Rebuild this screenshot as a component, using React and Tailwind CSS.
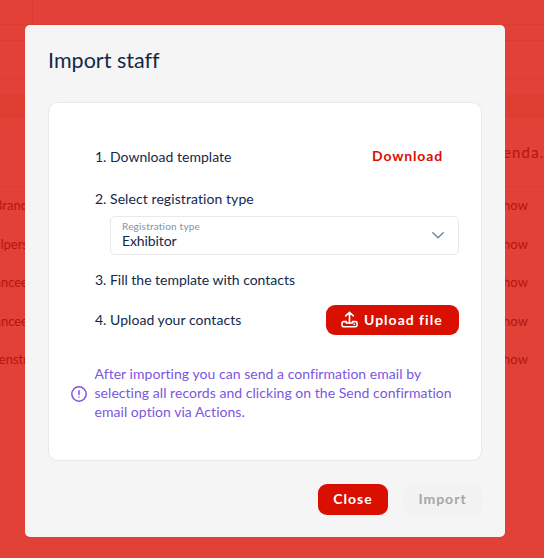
import React from 'react';

const rows = [
  { id: 1, name: 'Brand', action: 'Show' },
  { id: 2, name: 'lpers', action: 'Show' },
  { id: 3, name: 'ancee', action: 'Show' },
  { id: 4, name: 'ancee', action: 'Show' },
  { id: 5, name: 'enstr', action: 'Show' },
];

const UploadIcon = () => (
  <svg className="mb-[2px] shrink-0" width="17" height="17" viewBox="0 0 17 17" fill="none" stroke="currentColor" strokeWidth="1.6" strokeLinecap="round" strokeLinejoin="round">
    <path d="M8.5 12V1.3M4.7 4.9l3.8-3.7 3.8 3.7" />
    <path d="M5.4 10.6H2.6a1.6 1.6 0 0 0-1.6 1.6v2a1.6 1.6 0 0 0 1.6 1.6h11.8a1.6 1.6 0 0 0 1.6-1.6v-2a1.6 1.6 0 0 0-1.6-1.6h-2.8M5.4 10.6v1.4h6.2v-1.4" />
    <path d="M13.2 13.4h.1" />
  </svg>
);

const InfoIcon = () => (
  <svg className="mt-[2px] shrink-0" width="16" height="16" viewBox="0 0 16 16" fill="none" stroke="currentColor" strokeWidth="1.5" strokeLinecap="round">
    <circle cx="8" cy="8" r="7.2" />
    <path d="M8 4.8v3.6M8 11v.1" />
  </svg>
);

// Staff list that stays visible around the dialog
function StaffPage() {
  return (
    <div className="flex h-full flex-col text-[13px] text-[#b5150e]">
      <div className="h-[25px] border-b border-[#dc3d31] pl-8">
        <div className="h-full border-l border-[#dc3d31]" />
      </div>
      <div className="h-4 border-b border-[#dc3d31]" />
      <div className="h-[38px] border-b border-[#dc3d31]" />
      <div className="h-[16px]" />
      <div className="h-[23px] bg-[#de3d32]" />
      <div className="flex h-[69px] items-center justify-end overflow-hidden border-b border-[#dc3d31]">
        <span className="w-[50px] whitespace-nowrap text-[15px] tracking-[1.2px]">genda...</span>
      </div>
      {rows.map((row) => (
        <div key={row.id} className="flex h-[38.5px] shrink-0 items-center justify-between border-b border-[#de3e33]">
          <div className="flex w-[28px] justify-end">
            <span>{row.name}</span>
          </div>
          <span className="pr-4 tracking-[0.1px]">{row.action}</span>
        </div>
      ))}
    </div>
  );
}

function App() {
  return (
    <div className="relative h-[558px] w-[544px] overflow-hidden bg-[#e14136] font-['Lato',sans-serif]">
      <StaffPage />

      {/* Dialog */}
      <div className="absolute top-[25px] left-[25px] flex h-[512px] w-[480px] flex-col rounded-[5px] bg-[#f5f5f5] px-[23px] text-[#13294b]">
        <h2 className="mt-[20px] h-[30px] text-[21.5px] leading-[30px] tracking-[0.02px] whitespace-nowrap">Import staff</h2>

        <div className="mt-[27px] flex h-[359px] flex-col rounded-[10px] border border-[#e9e9e9] bg-white pr-[22px] pl-[22px] text-[14px]">
          <div className="mt-[38px] ml-6 flex h-[30px] items-center">
            <span className="w-[15px]">1.</span>
            <span className="tracking-[0.02px]">Download template</span>
            <span className="mr-[16px] ml-auto pb-[1px] font-bold tracking-[0.85px] text-[#d90f00]">Download</span>
          </div>

          <div className="mt-[17px] ml-6 flex h-5 items-center">
            <span className="w-[15px]">2.</span>
            <span className="tracking-[0.08px]">Select registration type</span>
          </div>
          <div className="mt-[8px] ml-[39px] flex h-[39px] items-center justify-between rounded-[5px] border border-[#e9e9e9] pr-[14px] pl-[11px]">
            <div className="flex flex-col pb-[3px]">
              <span className="text-[10px] leading-[13px] tracking-[0.2px] text-[#8193a6]">Registration type</span>
              <span className="text-[14px] leading-[15px] tracking-[-0.1px]">Exhibitor</span>
            </div>
            <svg width="12" height="7" viewBox="0 0 12 7" fill="none" stroke="#6d8aa3" strokeWidth="1.5" strokeLinecap="round" strokeLinejoin="round">
              <path d="M.8.8 6 5.8 11.2.8" />
            </svg>
          </div>

          <div className="mt-[14px] ml-6 flex h-5 items-center">
            <span className="w-[15px]">3.</span>
            <span className="tracking-[-0.02px]">Fill the template with contacts</span>
          </div>

          <div className="mt-[16px] ml-6 flex h-[30px] items-center">
            <span className="w-[15px] pb-[2px]">4.</span>
            <span className="pb-[2px] tracking-[0.05px]">Upload your contacts</span>
            <button className="ml-auto flex h-[30px] w-[133px] items-center rounded-[9px] bg-[#d90f00] pl-[15px] font-bold text-white">
              <UploadIcon />
              <span className="ml-[6px] pb-[2px] tracking-[1px] whitespace-nowrap">Upload file</span>
            </button>
          </div>

          <div className="mt-[29px] flex items-center text-[#7c56e1]">
            <InfoIcon />
            <p className="ml-[7.5px] text-[14px] leading-[19.2px] tracking-[0.04px] whitespace-nowrap">
              After importing you can send a confirmation email by<br />
              selecting all records and clicking on the Send confirmation<br />
              email option via Actions.
            </p>
          </div>
        </div>

        <div className="mt-[23px] flex justify-end gap-[15px] text-[14px] font-bold tracking-[1px]">
          <button className="h-[31px] w-[70px] rounded-[9px] bg-[#d90f00] pb-[2px] text-white">Close</button>
          <button className="h-[31px] w-[79px] rounded-[9px] bg-[#f2f2f2] pb-[2px] text-[#a5a5a5]">Import</button>
        </div>
      </div>
    </div>
  );
}

export default App;
